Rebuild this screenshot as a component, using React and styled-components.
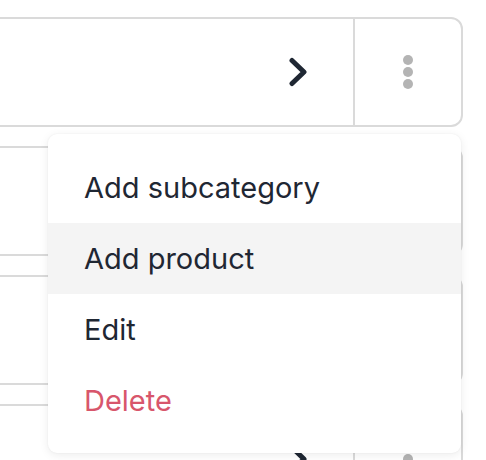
import React from "react";
import styled, { createGlobalStyle } from "styled-components";

const Global = createGlobalStyle`
  html, body { margin: 0; padding: 0; background: #ffffff; }
  body { font-family: Inter, "Noto Sans", sans-serif; overflow: hidden; }
`;

const Page = styled.div`
  position: relative;
  width: 486px;
  height: 460px;
  overflow: hidden;
`;

const List = styled.div`
  display: flex;
  flex-direction: column;
  gap: 19px;
  padding-top: 17px;
  margin-left: -40px;
  width: 503px;
`;

const Row = styled.div`
  display: flex;
  height: 110px;
  box-sizing: border-box;
  border: 2px solid #dadada;
  border-radius: 12px;
  background: #ffffff;
`;

const Main = styled.div`
  flex: 1;
  display: flex;
  align-items: center;
  justify-content: flex-end;
  padding-right: 45px;
`;

const Action = styled.div`
  width: 106px;
  display: flex;
  align-items: center;
  justify-content: center;
  border-left: 2px solid #dadada;
`;

const Dots = styled.div`
  display: flex;
  flex-direction: column;
  gap: 2px;
  span {
    width: 10px;
    height: 10px;
    border-radius: 50%;
    background: #b4b4b4;
  }
`;

const Menu = styled.div`
  position: absolute;
  left: 48px;
  top: 134px;
  width: 413px;
  box-sizing: border-box;
  padding: 18px 0 17px;
  background: #ffffff;
  border-radius: 9px;
  box-shadow: 0 2px 10px rgba(0, 0, 0, 0.08), 0 0 2px rgba(0, 0, 0, 0.06);
`;

const Item = styled.div`
  height: 71px;
  display: flex;
  align-items: center;
  padding: 0 36px;
  font-size: 29px;
  color: ${(p) => (p.$danger ? "#d8566b" : "#1f2733")};
  background: ${(p) => (p.$active ? "#f4f4f4" : "transparent")};
`;

const Chevron = () => (
  <svg width="20" height="30" viewBox="0 0 20 30" fill="none">
    <path
      d="M4 3.5 L16 15 L4 26.5"
      stroke="#1f2733"
      strokeWidth="5"
      strokeLinecap="round"
      strokeLinejoin="round"
    />
  </svg>
);

const CategoryRow = () => (
  <Row>
    <Main>
      <Chevron />
    </Main>
    <Action>
      <Dots>
        <span />
        <span />
        <span />
      </Dots>
    </Action>
  </Row>
);

export default function App() {
  return (
    <Page>
      <Global />
      <List>
        <CategoryRow />
        <CategoryRow />
        <CategoryRow />
        <CategoryRow />
      </List>
      <Menu>
        <Item>Add subcategory</Item>
        <Item $active>Add product</Item>
        <Item>Edit</Item>
        <Item $danger>Delete</Item>
      </Menu>
    </Page>
  );
}
